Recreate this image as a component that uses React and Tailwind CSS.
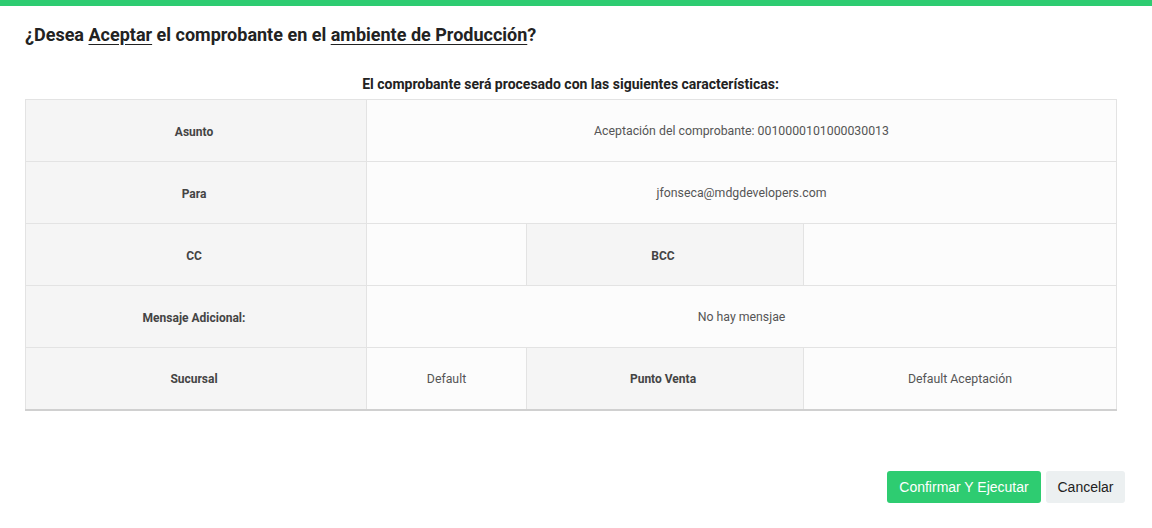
import React from "react";

const label = "bg-[#f5f5f5] text-[#444] font-bold text-[12px] text-center align-middle border border-[#e3e3e3] pt-[2px] pr-[4px]";
const value = "bg-[#fcfcfc] text-[#555] text-[12.3px] text-center align-middle border border-[#e3e3e3] pt-[2px]";

export default function App() {
  return (
    <div className="w-[1152px] h-[528px] bg-white relative overflow-hidden" style={{ fontFamily: "Roboto, 'Liberation Sans', sans-serif" }}>
      <div className="h-[6px] bg-[#2ecc71]" />
      <div className="px-[25px]">
        <h2 className="mt-[17px] text-[18px] leading-[24px] font-bold text-[#222]">
          ¿Desea <span className="underline underline-offset-[3px]">Aceptar</span> el comprobante en el{" "}
          <span className="underline underline-offset-[3px]">ambiente de Producción</span>?
        </h2>
        <div className="w-[1091px]">
          <p className="mt-[28px] mb-[6px] text-center text-[14px] leading-[18px] font-bold text-[#222]">
            El comprobante será procesado con las siguientes características:
          </p>
          <table className="w-[1091px] border-collapse table-fixed border border-[#cfcfcf] border-b-2 border-b-[#d0d0d0]">
            <colgroup>
              <col className="w-[341px]" />
              <col className="w-[160px]" />
              <col className="w-[277px]" />
              <col className="w-[313px]" />
            </colgroup>
            <tbody>
              <tr className="h-[62px]">
                <td className={label}>Asunto</td>
                <td className={value} colSpan={3}>Aceptación del comprobante: 0010000101000030013</td>
              </tr>
              <tr className="h-[62px]">
                <td className={label}>Para</td>
                <td className={value} colSpan={3}>jfonseca@mdgdevelopers.com</td>
              </tr>
              <tr className="h-[62px]">
                <td className={label}>CC</td>
                <td className={value}></td>
                <td className={label}>BCC</td>
                <td className={value}></td>
              </tr>
              <tr className="h-[62px]">
                <td className={label}>Mensaje Adicional:</td>
                <td className={value} colSpan={3}>No hay mensjae</td>
              </tr>
              <tr className="h-[62px]">
                <td className={label}>Sucursal</td>
                <td className={value}>Default</td>
                <td className={label}>Punto Venta</td>
                <td className={value}>Default Aceptación</td>
              </tr>
            </tbody>
          </table>
        </div>
      </div>
      <div className="flex justify-end gap-[5px] pr-[27px] mt-[60px]" style={{ fontFamily: "'Liberation Sans', Arial, sans-serif" }}>
        <button className="h-[32px] w-[154px] rounded-[3px] bg-[#2ecc71] text-white text-[14px] pt-[2px]">Confirmar Y Ejecutar</button>
        <button className="h-[32px] w-[79px] rounded-[3px] bg-[#ecf0f1] text-[#222] text-[14px] pt-[2px]">Cancelar</button>
      </div>
    </div>
  );
}
